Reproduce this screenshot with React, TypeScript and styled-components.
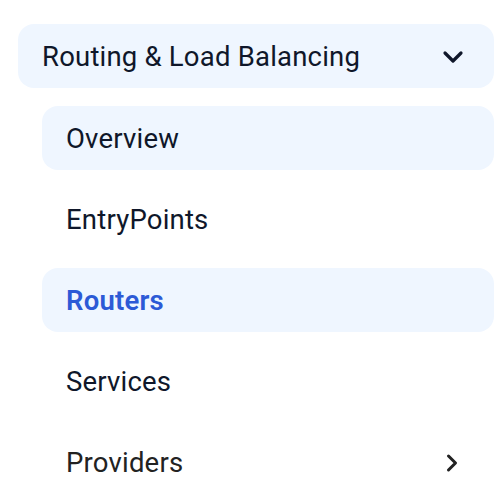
import React from "react";
import styled, { createGlobalStyle } from "styled-components";

const Global = createGlobalStyle`
  html, body { margin: 0; padding: 0; background: #ffffff; }
  body { font-family: Roboto, "Noto Sans", "Liberation Sans", sans-serif; }
`;

const Nav = styled.nav`
  width: 494px;
  box-sizing: border-box;
  padding: 24px 0 0 18px;
  display: flex;
  flex-direction: column;
`;

const GroupHeader = styled.div`
  height: 64px;
  box-sizing: border-box;
  display: flex;
  align-items: center;
  justify-content: space-between;
  padding: 1px 25px 0 24px;
  border-radius: 16px;
  background: #eff6ff;
  color: #0f172a;
  font-size: 27.5px;
  letter-spacing: 0.2px;
  line-height: 1;
`;

const SubList = styled.ul`
  list-style: none;
  margin: 18px 0 0 24px;
  padding: 0;
  display: flex;
  flex-direction: column;
  gap: 17px;
`;

const Item = styled.li<{ $active?: boolean; $current?: boolean; $muted?: boolean }>`
  height: 64px;
  box-sizing: border-box;
  display: flex;
  align-items: center;
  justify-content: space-between;
  padding: 1px 28px 0 24px;
  border-radius: 16px;
  font-size: 27.5px;
  letter-spacing: 0.2px;
  line-height: 1;
  background: ${(p) => (p.$active || p.$current ? "#eff6ff" : "transparent")};
  color: ${(p) => (p.$current ? "#2c5ad6" : p.$muted ? "#222222" : "#0f172a")};
  font-weight: ${(p) => (p.$current ? 600 : 400)};
`;

const Chevron = styled.svg<{ $size: number }>`
  width: ${(p) => p.$size}px;
  height: ${(p) => p.$size}px;
  flex: none;
`;

const ChevronDown = () => (
  <Chevron $size={32} viewBox="0 0 24 24" fill="none" stroke="#0f172a" strokeWidth={2.4} strokeLinecap="round" strokeLinejoin="round">
    <path d="m6 9 6 6 6-6" />
  </Chevron>
);

const ChevronRight = () => (
  <Chevron $size={28} viewBox="0 0 24 24" fill="none" stroke="#222222" strokeWidth={2.6} strokeLinecap="round" strokeLinejoin="round">
    <path d="m9 18 6-6-6-6" />
  </Chevron>
);

export default function App() {
  return (
    <>
      <Global />
      <Nav>
        <GroupHeader>
          <span>Routing &amp; Load Balancing</span>
          <ChevronDown />
        </GroupHeader>
        <SubList>
          <Item $active>Overview</Item>
          <Item>EntryPoints</Item>
          <Item $current>Routers</Item>
          <Item>Services</Item>
          <Item $muted>
            <span>Providers</span>
            <ChevronRight />
          </Item>
        </SubList>
      </Nav>
    </>
  );
}
